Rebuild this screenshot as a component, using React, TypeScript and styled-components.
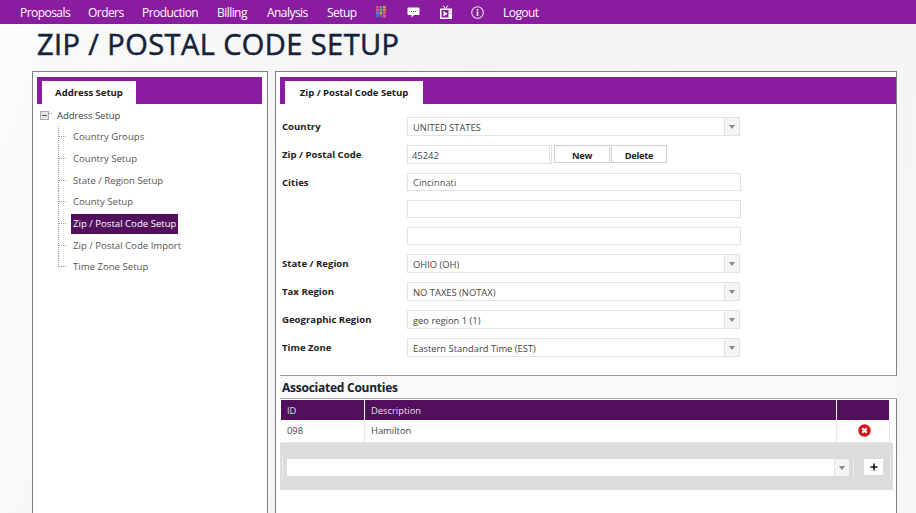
import React from "react";
import styled, { createGlobalStyle } from "styled-components";

const FONT = `"Open Sans", "Noto Sans", "Liberation Sans", sans-serif`;
const PURPLE = "#8a1c9f";
const DARK = "#52105c";

const Global = createGlobalStyle`
  html, body { margin: 0; padding: 0; height: 513px; overflow: hidden; }
  body { font-family: ${FONT}; background: linear-gradient(110deg, #fbfbfb 0%, #f3f3f3 45%, #f6f6f6 100%); color: #333; }
  * { box-sizing: border-box; }
`;

const Page = styled.div`
  width: 916px;
  height: 513px;
  overflow: hidden;
`;

const NavBar = styled.nav`
  height: 24px;
  background: ${PURPLE};
  display: flex;
  align-items: center;
  padding: 0 0 0 20px;
  color: #fff;
`;

const NavItem = styled.span<{ $w: number }>`
  width: ${(p) => p.$w}px;
  font-size: 12px;
  letter-spacing: -0.55px;
  white-space: nowrap;
`;

const NavIcon = styled.span<{ $w: number }>`
  width: ${(p) => p.$w}px;
  display: flex;
  align-items: center;
`;

const Title = styled.h1`
  margin: 0;
  height: 47px;
  padding: 2px 0 0 37px;
  font-size: 29px;
  line-height: 36px;
  font-weight: 400;
  letter-spacing: 0.42px;
  color: #14233a;
  text-shadow: 1px 1px 0 #fff;
  -webkit-text-stroke: 0.55px #14233a;
  white-space: nowrap;
`;

const Panels = styled.div`
  display: flex;
  gap: 7px;
  padding-left: 32px;
`;

const Panel = styled.section<{ $w: number }>`
  width: ${(p) => p.$w}px;
  height: 470px;
  background: #fff;
  border: 1px solid #808080;
  padding: 5px 0 0 4px;
`;

const TabBar = styled.div<{ $mr: number }>`
  height: 27px;
  margin-right: ${(p) => p.$mr}px;
  background: ${PURPLE};
  padding: 4px 0 0 5px;
  display: flex;
`;

const Tab = styled.div<{ $w: number }>`
  width: ${(p) => p.$w}px;
  height: 23px;
  background: #fff;
  font-size: 9.6px;
  font-weight: 700;
  line-height: 23px;
  text-align: center;
  color: #1a1a1a;
  letter-spacing: -0.04px;
`;

const Tree = styled.div`
  padding: 4px 0 0 2px;
`;

const TreeRoot = styled.div`
  display: flex;
  align-items: center;
  height: 14px;
  font-size: 9.6px;
  letter-spacing: -0.1px;
  color: #444;
`;

const TreeChildren = styled.div`
  padding: 4.3px 0 0 19px;
`;

const TreeRow = styled.div`
  display: flex;
  align-items: center;
  height: 21.7px;
`;

const TreeLabel = styled.span<{ $active?: boolean }>`
  font-size: 9.6px;
  letter-spacing: 0;
  line-height: 20px;
  padding: 0 2px;
  margin-left: -1px;
  white-space: nowrap;
  color: ${(p) => (p.$active ? "#fff" : "#555")};
  background: ${(p) => (p.$active ? DARK : "transparent")};
`;

const Form = styled.div`
  padding: 13px 0 0 2px;
  display: grid;
  grid-template-columns: 125px 334px;
  row-gap: 9px;
  align-items: start;
`;

const Label = styled.label`
  font-size: 9.6px;
  font-weight: 700;
  color: #222;
  line-height: 20px;
  height: 19px;
  letter-spacing: 0;
`;

const SelectBox = styled.div`
  width: 333px;
  height: 19px;
  border: 1px solid #e2e2e2;
  background: #fff;
  display: flex;
  align-items: stretch;
`;

const SelectText = styled.span`
  flex: 1;
  font-size: 9.4px;
  line-height: 19px;
  padding-left: 5px;
  color: #444;
  white-space: nowrap;
`;

const Arrow = styled.span`
  width: 15px;
  background: #f5f5f5;
  border-left: 1px solid #e2e2e2;
  display: flex;
  align-items: center;
  justify-content: center;
  &::after {
    content: "";
    border-left: 3.5px solid transparent;
    border-right: 3.5px solid transparent;
    border-top: 4px solid #888;
  }
`;

const TextBox = styled.div`
  height: 18px;
  width: 334px;
  border: 1px solid #e2e2e2;
  background: #fff;
  font-size: 9.4px;
  line-height: 18px;
  padding-left: 5px;
  color: #555;
`;

const Stack = styled.div`
  display: flex;
  flex-direction: column;
  gap: 9px;
`;

const ZipRow = styled.div`
  display: flex;
  align-items: flex-start;
`;

const ZipInput = styled.div`
  width: 145px;
  height: 19px;
  border: 1px solid #e2e2e2;
  border-right: 3px double #e2e2e2;
  background: #fff;
  font-size: 9.4px;
  line-height: 19px;
  padding-left: 4px;
  color: #444;
  margin-right: 2px;
`;

const Btn = styled.div`
  width: 56px;
  height: 18px;
  margin-right: 1px;
  border: 1px solid #cfcfcf;
  background: #fff;
  font-size: 9.2px;
  font-weight: 700;
  line-height: 19px;
  text-align: center;
  letter-spacing: -0.25px;
  color: #222;
`;

const SectionHead = styled.div`
  margin: 18px 0 0 0;
  height: 24px;
  width: 617px;
  background: #f8f8f8;
  border-top: 1px solid #999;
  border-bottom: 1px solid #aaa;
  font-size: 12px;
  font-weight: 700;
  line-height: 23px;
  letter-spacing: -0.25px;
  padding-left: 2px;
  color: #14202e;
`;

const CountyGrid = styled.div`
  margin: 1px 0 0 1px;
  width: 609px;
  display: grid;
  grid-template-columns: 84px 472px 53px;
`;

const HeadCell = styled.div`
  height: 20px;
  background: ${DARK};
  border-right: 1px solid #fff;
  color: #e8dcea;
  font-size: 9.4px;
  line-height: 21px;
  padding-left: 6px;
  &:last-child { border-right: 0; }
`;

const Cell = styled.div<{ $center?: boolean }>`
  height: 23px;
  border-right: 1px solid #e6e6e6;
  border-bottom: 1px solid #e6e6e6;
  font-size: 9.4px;
  line-height: 21px;
  padding-left: ${(p) => (p.$center ? 2 : 6)}px;
  color: #444;
  display: flex;
  align-items: ${(p) => (p.$center ? "center" : "flex-start")};
  justify-content: ${(p) => (p.$center ? "center" : "flex-start")};
`;

const AddBand = styled.div`
  margin-top: 0;
  width: 613px;
  height: 47px;
  background: #dcdcdc;
  padding: 10px 0 0 2px;
  display: flex;
  align-items: flex-start;
`;

const AddSlot = styled.div`
  height: 29px;
  padding: 6px 4px 0 4px;
  border-left: 1px solid #ececec;
  border-right: 1px solid #ececec;
  display: flex;
`;

const AddSelect = styled.div`
  width: 562px;
  height: 17px;
  background: #fff;
  display: flex;
  align-items: stretch;
  justify-content: flex-end;
`;

const PlusCell = styled.div`
  padding: 6px 7px 0 10px;
  height: 29px;
  border-right: 1px solid #ececec;
`;

const PlusBtn = styled.div`
  width: 19px;
  height: 16px;
  background: #fff;
  display: flex;
  align-items: center;
  justify-content: center;
  color: #111;
`;

const Connector = ({ last }: { last?: boolean }) => (
  <svg width="14" height="22" viewBox="0 0 14 22" style={{ flex: "none" }}>
    <path d={last ? "M0.5 0V11" : "M0.5 0V22"} stroke="#999" strokeDasharray="1 1" />
    <path d="M1 10.5H9" stroke="#999" strokeDasharray="1 1" />
  </svg>
);

const Minus = () => (
  <svg width="15" height="12" viewBox="0 0 15 12" style={{ flex: "none", marginRight: 3 }}>
    <rect x="1.5" y="2.5" width="8" height="8" fill="#e4e4e4" stroke="#aaa" />
    <path d="M3 6.5H8" stroke="#555" />
    <path d="M10 4.5H14" stroke="#999" strokeDasharray="1 1" />
  </svg>
);

const GridIcon = () => {
  const colors = ["#c44f7a", "#6b9f6a", "#d4a13c", "#d8568a", "#4fb08e", "#e08a3c", "#5a7fc8", "#9ac24c", "#e04ca8", "#3f6fb0", "#7a4fb0", "#e060a0"];
  return (
    <svg width="10" height="12" viewBox="0 0 10 12">
      {colors.map((c, i) => (
        <rect key={i} x={(i % 3) * 3.5} y={Math.floor(i / 3) * 3} width="2.8" height="2.6" fill={c} />
      ))}
    </svg>
  );
};

const ChatIcon = () => (
  <svg width="13" height="13" viewBox="0 0 13 13">
    <path d="M1.5 1.5H11.5Q12.5 1.5 12.5 2.5V8Q12.5 9 11.5 9H7L4.5 11.5V9H1.5Q0.5 9 0.5 8V2.5Q0.5 1.5 1.5 1.5Z" fill="#fff" />
    <path d="M4 5.5H5M6 5.5H7M8 5.5H9" stroke={PURPLE} />
  </svg>
);

const TvIcon = () => (
  <svg width="14" height="15" viewBox="0 0 14 15">
    <path d="M4 0.5L6.5 3.5L9 0.5" stroke="#fff" fill="none" />
    <rect x="1" y="3.5" width="12" height="10.5" fill="#fff" />
    <rect x="2.5" y="5" width="7" height="7.5" fill={PURPLE} />
    <path d="M4.5 6L8.5 8.7L4.5 11.5Z" fill="#fff" />
    <path d="M11 5.5V6.5M11 8V9" stroke={PURPLE} />
  </svg>
);

const InfoIcon = () => (
  <svg width="13" height="13" viewBox="0 0 13 13">
    <circle cx="6.5" cy="6.5" r="5.8" fill="none" stroke="#eadcee" strokeWidth="1.1" />
    <rect x="5.7" y="5.3" width="1.6" height="4.7" fill="#fff" />
    <rect x="5.7" y="3" width="1.6" height="1.5" fill="#fff" />
  </svg>
);

const RemoveIcon = () => (
  <svg width="13" height="13" viewBox="0 0 13 13" style={{ marginTop: -1 }}>
    <circle cx="6.5" cy="6.5" r="6.2" fill="#d8101a" />
    <path d="M4.2 4.2L8.8 8.8M8.8 4.2L4.2 8.8" stroke="#fff" strokeWidth="2.2" />
  </svg>
);

const PlusIcon = () => (
  <svg width="8" height="8" viewBox="0 0 8 8">
    <path d="M4 0.5V7.5M0.5 4H7.5" stroke="#111" strokeWidth="1.6" />
  </svg>
);

const Select = ({ text }: { text: string }) => (
  <SelectBox>
    <SelectText>{text}</SelectText>
    <Arrow />
  </SelectBox>
);

const treeItems = [
  "Country Groups",
  "Country Setup",
  "State / Region Setup",
  "County Setup",
  "Zip / Postal Code Setup",
  "Zip / Postal Code Import",
  "Time Zone Setup",
];

export default function App() {
  return (
    <Page>
      <Global />
      <NavBar>
        <NavItem $w={68}>Proposals</NavItem>
        <NavItem $w={54}>Orders</NavItem>
        <NavItem $w={75}>Production</NavItem>
        <NavItem $w={50}>Billing</NavItem>
        <NavItem $w={60}>Analysis</NavItem>
        <NavItem $w={49}>Setup</NavItem>
        <NavIcon $w={31}><GridIcon /></NavIcon>
        <NavIcon $w={32}><ChatIcon /></NavIcon>
        <NavIcon $w={32}><TvIcon /></NavIcon>
        <NavIcon $w={32}><InfoIcon /></NavIcon>
        <NavItem $w={50}>Logout</NavItem>
      </NavBar>
      <Title>ZIP / POSTAL CODE SETUP</Title>
      <Panels>
        <Panel $w={236}>
          <TabBar $mr={5}><Tab $w={94}>Address Setup</Tab></TabBar>
          <Tree>
            <TreeRoot><Minus />Address Setup</TreeRoot>
            <TreeChildren>
              {treeItems.map((t, i) => (
                <TreeRow key={t}>
                  <Connector last={i === treeItems.length - 1} />
                  <TreeLabel $active={t === "Zip / Postal Code Setup"}>{t}</TreeLabel>
                </TreeRow>
              ))}
            </TreeChildren>
          </Tree>
        </Panel>
        <Panel $w={622}>
          <TabBar $mr={0}><Tab $w={138}>Zip / Postal Code Setup</Tab></TabBar>
          <Form>
            <Label>Country</Label>
            <Select text="UNITED STATES" />
            <Label>Zip / Postal Code</Label>
            <ZipRow>
              <ZipInput>45242</ZipInput>
              <Btn>New</Btn>
              <Btn>Delete</Btn>
            </ZipRow>
            <Label>Cities</Label>
            <Stack>
              <TextBox>Cincinnati</TextBox>
              <TextBox />
              <TextBox />
            </Stack>
            <Label>State / Region</Label>
            <Select text="OHIO (OH)" />
            <Label>Tax Region</Label>
            <Select text="NO TAXES (NOTAX)" />
            <Label>Geographic Region</Label>
            <Select text="geo region 1 (1)" />
            <Label>Time Zone</Label>
            <Select text="Eastern Standard Time (EST)" />
          </Form>
          <SectionHead>Associated Counties</SectionHead>
          <CountyGrid>
            <HeadCell>ID</HeadCell>
            <HeadCell>Description</HeadCell>
            <HeadCell />
            <Cell>098</Cell>
            <Cell>Hamilton</Cell>
            <Cell $center><RemoveIcon /></Cell>
          </CountyGrid>
          <AddBand>
            <AddSlot>
              <AddSelect><Arrow /></AddSelect>
            </AddSlot>
            <PlusCell><PlusBtn><PlusIcon /></PlusBtn></PlusCell>
          </AddBand>
        </Panel>
      </Panels>
    </Page>
  );
}
